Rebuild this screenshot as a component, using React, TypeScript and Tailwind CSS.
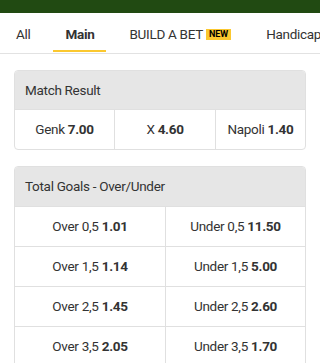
import React from 'react';

const tabs = ['All', 'Main', 'BUILD A BET', 'Handicaps', 'Goals'];

const goals = [
  ['Over 0,5', '1.01', 'Under 0,5', '11.50'],
  ['Over 1,5', '1.14', 'Under 1,5', '5.00'],
  ['Over 2,5', '1.45', 'Under 2,5', '2.60'],
  ['Over 3,5', '2.05', 'Under 3,5', '1.70'],
];

function Odd({ label, price }: { label: string; price: string }) {
  return (
    <span className="text-[13.5px] tracking-[-0.3px] text-[#333]">
      {label} <span className="font-bold">{price}</span>
    </span>
  );
}

export default function App() {
  return (
    <div className="h-[363px] w-[320px] overflow-hidden bg-white font-['Roboto',sans-serif]">
      <div className="h-[13px] bg-[#214a12]" />

      <div className="flex h-[41px] items-stretch gap-[11px] overflow-hidden whitespace-nowrap border-b border-[#e2e2e2] pl-1">
        {tabs.map((t) => {
          const active = t === 'Main';
          return (
            <div
              key={t}
              className={`relative flex shrink-0 items-center px-3 pt-[2px] text-[13.5px] tracking-[-0.3px] ${
                active ? 'font-bold text-[#333]' : 'text-[#333]'
              }`}
            >
              {t}
              {t === 'BUILD A BET' && (
                <span className="ml-[3px] bg-[#fbc82f] px-[3px] text-[9px] font-bold leading-[11px] tracking-normal text-black">
                  NEW
                </span>
              )}
              {active && <div className="absolute inset-x-0 bottom-[1px] h-[2px] bg-[#fbc82f]" />}
            </div>
          );
        })}
      </div>

      <div className="space-y-4 px-[14px] pt-4">
        <div className="overflow-hidden rounded-[4px] border border-[#e0e0e0]">
          <div className="flex h-[38px] items-center bg-[#e6e6e6] px-[10px] text-[13.5px] tracking-[-0.3px] text-[#333]">
            Match Result
          </div>
          <div className="grid h-[40px] grid-cols-[100px_101px_1fr] border-t border-[#e0e0e0]">
            <div className="flex items-center justify-center border-r border-[#e0e0e0]">
              <Odd label="Genk" price="7.00" />
            </div>
            <div className="flex items-center justify-center border-r border-[#e0e0e0]">
              <Odd label="X" price="4.60" />
            </div>
            <div className="flex items-center justify-center">
              <Odd label="Napoli" price="1.40" />
            </div>
          </div>
        </div>

        <div className="overflow-hidden rounded-[4px] border border-[#e0e0e0]">
          <div className="flex h-[39px] items-center bg-[#e6e6e6] px-[10px] text-[13.5px] tracking-[-0.3px] text-[#333]">
            Total Goals - Over/Under
          </div>
          {goals.map((g) => (
            <div key={g[0]} className="grid h-[40px] grid-cols-[151px_1fr] border-t border-[#e0e0e0]">
              <div className="flex items-center justify-center border-r border-[#e0e0e0]">
                <Odd label={g[0]} price={g[1]} />
              </div>
              <div className="flex items-center justify-center">
                <Odd label={g[2]} price={g[3]} />
              </div>
            </div>
          ))}
        </div>
      </div>
    </div>
  );
}
